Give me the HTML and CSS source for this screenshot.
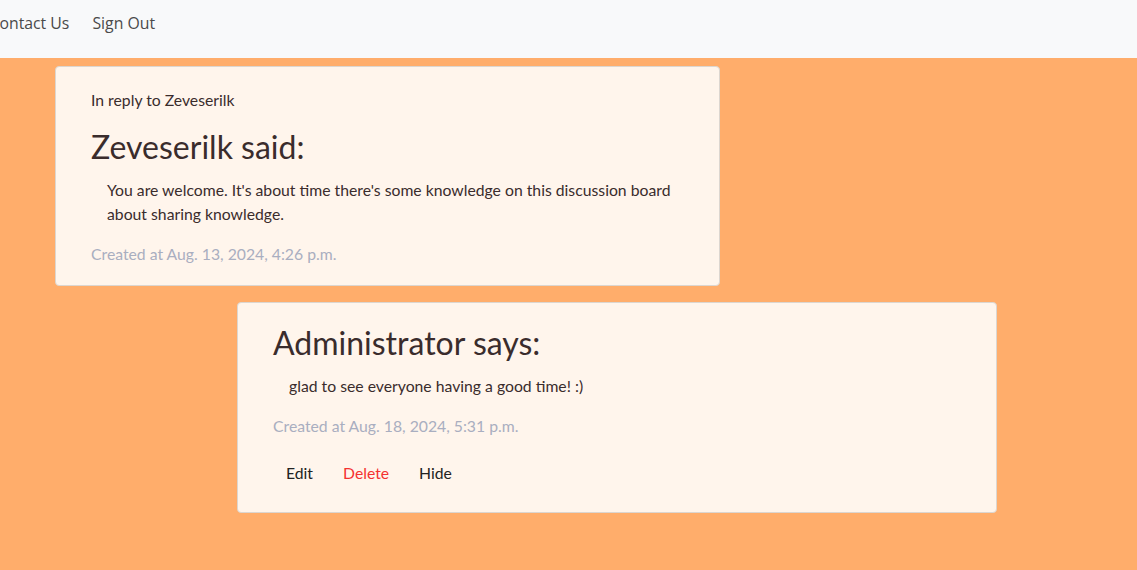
FILE: index.html
```html
<!DOCTYPE html>
<html>
<head>
<meta charset="utf-8">
<link rel="stylesheet" href="styles.css">
</head>
<body>
<nav class="navbar">
  <ul class="nav-links">
    <li><a href="#" class="nav-link">Contact Us</a></li>
    <li><a href="#" class="nav-link">Sign Out</a></li>
  </ul>
</nav>
<main class="thread">
  <article class="card card-parent">
    <p class="reply-to">In reply to Zeveserilk</p>
    <h2 class="author">Zeveserilk said:</h2>
    <p class="body">You are welcome. It's about time there's some knowledge on this discussion board about sharing knowledge.</p>
    <p class="created">Created at Aug. 13, 2024, 4:26 p.m.</p>
  </article>
  <article class="card card-reply">
    <h2 class="author">Administrator says:</h2>
    <p class="body">glad to see everyone having a good time! :)</p>
    <p class="created">Created at Aug. 18, 2024, 5:31 p.m.</p>
    <div class="actions">
      <button class="btn">Edit</button>
      <button class="btn btn-danger">Delete</button>
      <button class="btn">Hide</button>
    </div>
  </article>
</main>
</body>
</html>
```
FILE: styles.css
```css
html, body {
  margin: 0;
  padding: 0;
}
body {
  background: #ffad6b;
  font-family: Lato, "Liberation Sans", sans-serif;
  color: #3a2c2c;
  min-height: 570px;
}
.navbar {
  background: #f8f9fa;
  height: 58px;
  display: flex;
  align-items: center;
}
.nav-links {
  list-style: none;
  margin: 0 0 0 -22px;
  padding: 0;
  display: flex;
}
.nav-link {
  display: block;
  padding: 0 11.5px;
  font-family: "Open Sans", "Noto Sans", sans-serif;
  font-size: 15.8px;
  color: #4a4a4a;
  text-decoration: none;
  line-height: 22px;
  position: relative;
  top: -6px;
}
.thread {
  display: flex;
  flex-direction: column;
  align-items: flex-start;
  padding-top: 8px;
  gap: 16px;
}
.card {
  background: #fff5ec;
  border: 1px solid #dcd6d0;
  border-radius: 4px;
  box-sizing: border-box;
  padding: 21px 35px 19px;
}
.card-parent {
  margin-left: 55px;
  width: 665px;
}
.card-reply {
  margin-left: 237px;
  width: 760px;
  padding-bottom: 20px;
}
.card p {
  margin: 0;
  font-size: 15.75px;
  line-height: 24px;
}
.reply-to {
  margin-bottom: 16px !important;
}
.author {
  margin: 0 0 12px;
  font-weight: 400;
  font-size: 32px;
  line-height: 38px;
}
.body {
  padding-left: 16px;
  margin-bottom: 16px !important;
}
.created {
  color: #a9aec0;
}
.actions {
  margin-top: 16px;
  display: flex;
  gap: 4px;
}
.btn {
  font-family: Lato, "Liberation Sans", sans-serif;
  font-size: 15.75px;
  line-height: 24px;
  padding: 6px 12px;
  background: transparent;
  border: 1px solid transparent;
  border-radius: 4px;
  color: #222;
  cursor: pointer;
}
.btn-danger {
  color: #f43131;
}
```
